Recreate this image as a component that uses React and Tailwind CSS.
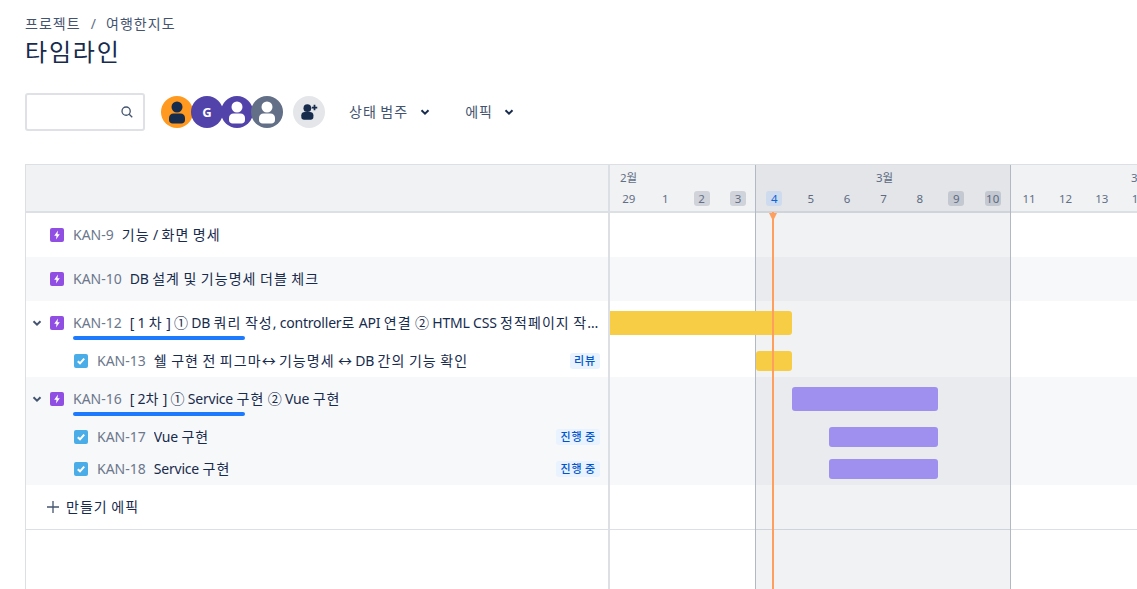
import React from "react";

const DAYS = [
	{ n: 29 }, { n: 1 }, { n: 2, off: true }, { n: 3, off: true },
	{ n: 4, today: true }, { n: 5 }, { n: 6 }, { n: 7 }, { n: 8 },
	{ n: 9, off: true }, { n: 10, off: true }, { n: 11 }, { n: 12 }, { n: 13 }, { n: 14 },
];

const ROWS = [
	{ id: "KAN-9", title: "기능 / 화면 명세", type: "epic" },
	{ id: "KAN-10", title: "DB 설계 및 기능명세 더블 체크", type: "epic", alt: true },
	{
		id: "KAN-12",
		title: "[ 1 차 ] ① DB 쿼리 작성, controller로 API 연결 ② HTML CSS 정적페이지 작성 및 연결",
		type: "epic",
		open: true,
		bar: { left: "ml-0", width: "w-[182px]", color: "bg-[#f8cd46]" },
	},
	{
		id: "KAN-13",
		title: "쉘 구현 전 피그마↔ 기능명세 ↔ DB 간의 기능 확인",
		type: "task",
		status: "리뷰",
		bar: { left: "ml-[146px]", width: "w-[36px]", color: "bg-[#f8cd46]" },
	},
	{
		id: "KAN-16",
		title: "[ 2차 ] ① Service 구현 ② Vue 구현",
		type: "epic",
		open: true,
		alt: true,
		bar: { left: "ml-[182px]", width: "w-[146px]", color: "bg-[#9f8fef]" },
	},
	{
		id: "KAN-17",
		title: "Vue 구현",
		type: "task",
		alt: true,
		status: "진행 중",
		bar: { left: "ml-[219px]", width: "w-[109px]", color: "bg-[#9f8fef]" },
	},
	{
		id: "KAN-18",
		title: "Service 구현",
		type: "task",
		alt: true,
		status: "진행 중",
		bar: { left: "ml-[219px]", width: "w-[109px]", color: "bg-[#9f8fef]" },
	},
];

// hangul sets a bit wider in the reference, so space those runs out
const Ko = ({ text }) =>
	text.split(/([\uAC00-\uD7A3]+)/).map((part, i) =>
		i % 2 === 1 ? (
			<span key={i} className="tracking-[0.075em]">
				{part}
			</span>
		) : (
			<span key={i} className="tracking-[-0.015em]">
				{part}
			</span>
		)
	);

const Chevron = ({ className = "" }) => (
	<svg viewBox="0 0 12 12" className={className} fill="none">
		<path d="M2.500 4.200 6 7.600l3.500-3.400" stroke="currentColor" strokeWidth="2" />
	</svg>
);

const EpicIcon = () => (
	<span className="flex h-[14px] w-[14px] flex-none items-center justify-center rounded-[2px] bg-[#904ee2]">
		<svg viewBox="0 0 14 14" className="h-[14px] w-[14px]">
			<path d="M8 2.500 4.200 7.800h2.300L6 11.500l3.800-5.300H7.500z" fill="#fff" />
		</svg>
	</span>
);

const TaskIcon = () => (
	<span className="flex h-[14px] w-[14px] flex-none items-center justify-center rounded-[2px] bg-[#4bade8]">
		<svg viewBox="0 0 14 14" className="h-[14px] w-[14px]" fill="none">
			<path d="M3.800 7.200 6 9.300l4.200-4.600" stroke="#fff" strokeWidth="2" />
		</svg>
	</span>
);

const Person = ({ head, body }) => (
	<svg viewBox="0 0 32 32" className="h-8 w-8">
		<circle cx="16" cy="11" r="5.500" fill={head} />
		<path d="M8 22c0-3 2-4.500 4.500-4.500h7c2.500 0 4.500 1.500 4.500 4.500v2c0 2.200-1.500 3.500-3.500 3.500h-9C9.500 27.500 8 26.200 8 24z" fill={body} />
	</svg>
);

const Avatar = ({ className, children }) => (
	<span
		className={`-ml-[2px] flex h-8 w-8 flex-none items-center justify-center overflow-hidden rounded-full first:ml-0 ${className}`}
	>
		{children}
	</span>
);

const RowLabel = ({ row }) => {
	const isEpic = row.type === "epic";
	return (
		<div
			className={`relative flex items-center pr-[6px] ${isEpic ? "h-11 pl-[24px]" : "h-8 pl-[48px]"} ${
				row.alt ? "bg-[#f7f8f9]" : "bg-white"
			}`}
		>
			<span className="flex w-0 flex-none items-center">
				{row.open && (
					<Chevron className="-ml-[19px] h-3 w-3 flex-none text-[#44546f]" />
				)}
			</span>
			{isEpic ? <EpicIcon /> : <TaskIcon />}
			<span className="ml-[9px] flex-none text-[#6b778c]">{row.id}</span>
			<span className="ml-2 min-w-0 flex-1 truncate text-[#172b4d]">
				<Ko text={row.title} />
			</span>
			{row.status && (
				<span className="mr-[2px] ml-2 flex-none rounded-[3px] bg-[#e9f2ff] px-[4px] py-0 text-[11px] leading-4 font-medium text-[#0055cc]">
					<Ko text={row.status} />
				</span>
			)}
			{row.open && (
				<span className="absolute top-[35px] left-[47px] h-[4px] w-[172px] rounded-full bg-[#1d7afc]" />
			)}
		</div>
	);
};

const RowBar = ({ row }) => (
	<div
		className={`flex items-center ${row.type === "epic" ? "h-11" : "h-8"} ${
			row.alt ? "bg-[#f7f8f9]" : "bg-white"
		}`}
	>
		{row.bar && (
			<div
				className={`relative z-10 rounded-[3px] ${row.bar.left} ${row.bar.width} ${row.bar.color} ${
					row.type === "epic" ? "h-6" : "h-5"
				} ${row.bar.left === "ml-0" ? "rounded-l-none" : ""}`}
			/>
		)}
	</div>
);

const DayCell = ({ day }) => (
	<div className="flex w-[36.4px] flex-none justify-center">
		<span
			className={`flex h-[15px] min-w-[16px] items-center justify-center rounded-[3px] px-px text-[11.500px] ${
				day.today
					? "bg-[#dae6f8] text-[#0c66e4]"
					: day.off
						? "bg-[#091e42]/[0.14] text-[#626f86]"
						: "text-[#626f86]"
			}`}
		>
			{day.n}
		</span>
	</div>
);

export default function App() {
	return (
		<div className="flex h-[589px] w-[1137px] flex-col overflow-hidden bg-white pt-[14px] pl-[25px] font-['Noto_Sans','Noto_Sans_CJK_KR',sans-serif] text-[14px] leading-5 text-[#172b4d]">
			<div className="flex items-center text-[#44546f]">
				<span><Ko text="프로젝트" /></span>
				<span className="mx-[10px] text-[#626f86]">/</span>
				<span><Ko text="여행한지도" /></span>
			</div>
			<h1 className="mt-[2px] text-[24px] leading-8 font-normal">
				<Ko text="타임라인" />
			</h1>

			<div className="mt-[25px] flex h-[38px] items-center">
				<div className="flex h-[38px] w-[120px] items-center justify-end rounded-[3px] border-2 border-[#dfe1e6] bg-white pr-[9px]">
					<svg viewBox="0 0 16 16" className="h-[14px] w-[14px] text-[#44546f]" fill="none">
						<circle cx="7" cy="7" r="4.700" stroke="currentColor" strokeWidth="1.500" />
						<path d="m10.500 10.500 3.500 3.500" stroke="currentColor" strokeWidth="1.500" />
					</svg>
				</div>
				<div className="ml-[16px] flex items-center">
					<Avatar className="bg-[#ff991f]">
						<Person head="#172b4d" body="#172b4d" />
					</Avatar>
					<Avatar className="bg-[#5243aa] text-[13px] font-bold text-white">G</Avatar>
					<Avatar className="bg-[#5243aa]">
						<Person head="#fff" body="#fff" />
					</Avatar>
					<Avatar className="bg-[#626f86]">
						<Person head="#fff" body="#fff" />
					</Avatar>
				</div>
				<span className="ml-[10px] flex h-8 w-8 items-center justify-center rounded-full bg-[#e4e6ea]">
					<svg viewBox="0 0 20 20" className="h-[22px] w-[22px]">
						<circle cx="8.500" cy="6.500" r="3.500" fill="#172b4d" />
						<path d="M3 13c0-2 1.500-3 3-3h5c1.500 0 3 1 3 3v1.500c0 1.500-1 2.500-2.500 2.500h-6C4 17 3 16 3 14.500z" fill="#172b4d" />
						<path d="M15 3.500v5M12.500 6h5" stroke="#172b4d" strokeWidth="1.600" />
					</svg>
				</span>
				<span className="ml-6 text-[#44546f]"><Ko text="상태 범주" /></span>
				<Chevron className="ml-[11px] h-3 w-3 text-[#172b4d]" />
				<span className="ml-[34px] text-[#44546f]"><Ko text="에픽" /></span>
				<Chevron className="ml-[10px] h-3 w-3 text-[#172b4d]" />
			</div>

			<div className="mt-[33px] flex min-h-0 flex-1 border-t border-l border-[#dcdfe4]">
				{/* issue column */}
				<div className="w-[584px] flex-none border-r-2 border-[#dcdfe4]">
					<div className="h-[48px] border-b-2 border-[#dcdfe4] bg-[#f1f2f4]" />
					{ROWS.map((row) => (
						<RowLabel key={row.id} row={row} />
					))}
					<div className="flex h-[45px] items-center border-b border-[#dcdfe4] pl-[20px] text-[#172b4d]">
						<svg viewBox="0 0 14 14" className="h-[14px] w-[14px] text-[#44546f]" fill="none">
							<path d="M7 1v12M1 7h12" stroke="currentColor" strokeWidth="1.300" />
						</svg>
						<span className="ml-[6px]"><Ko text="만들기 에픽" /></span>
					</div>
				</div>

				{/* timeline */}
				<div className="relative min-w-0 flex-1 overflow-hidden">
					<div className="h-[48px] border-b-2 border-[#dcdfe4] bg-[#f1f2f4]">
						<div className="flex h-[23px] items-end text-[11.500px] text-[#626f86]">
							<span className="ml-[10px] w-[137px] flex-none"><Ko text="2월" /></span>
							<span className="w-[256px] flex-none text-center"><Ko text="3월" /></span>
							<span className="ml-[118px] flex-none"><Ko text="3월" /></span>
						</div>
						<div className="mt-[3px] ml-[0.6px] flex">
							{DAYS.map((day) => (
								<DayCell key={day.n} day={day} />
							))}
						</div>
					</div>
					{ROWS.map((row) => (
						<RowBar key={row.id} row={row} />
					))}
					<div className="h-[45px] border-b border-[#dcdfe4]" />

					{/* current month shade and today marker */}
					<div className="pointer-events-none absolute top-0 bottom-0 left-[145px] w-[256px] border-x border-[#b3b9c4] bg-[#091e42]/[0.06]" />
					<div className="absolute top-[47px] bottom-0 left-[162px] z-20 w-[2px] bg-[#ff9f5e]" />
					<div className="absolute top-[48px] left-[159px] z-20 h-0 w-0 border-x-4 border-t-[8px] border-x-transparent border-t-[#ff9f5e]" />
				</div>
			</div>
		</div>
	);
}
